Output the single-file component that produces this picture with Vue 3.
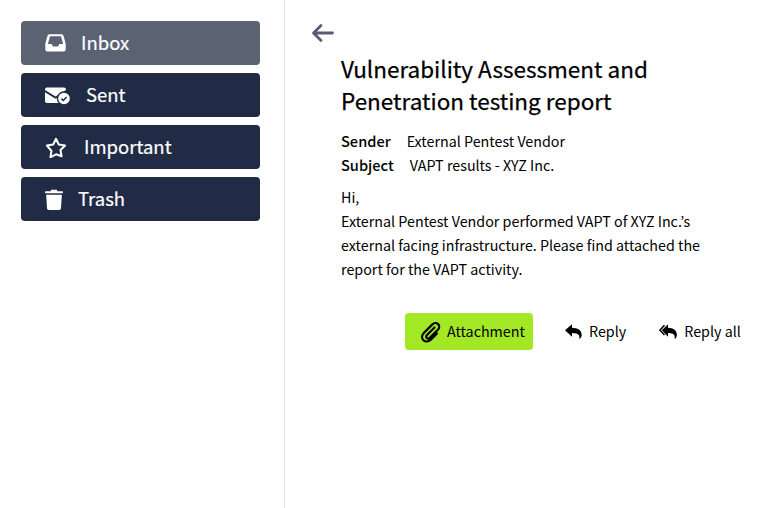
<script setup>
const items = [
  { label: 'Inbox', icon: 'inbox', active: true, gap: 'g1' },
  { label: 'Sent', icon: 'sent', gap: 'g2' },
  { label: 'Important', icon: 'star', gap: 'g3' },
  { label: 'Trash', icon: 'trash', gap: 'g4' }
]
</script>

<template>
  <div class="page">
    <aside class="side">
      <a v-for="it in items" :key="it.label" class="nav" :class="{ active: it.active }">
        <span class="ico" :class="it.gap">
          <svg v-if="it.icon === 'inbox'" width="21" height="18" viewBox="0 0 21 18">
            <path fill-rule="evenodd" fill="#fff" d="M4.6 0.3h11.800c1 0 1.800.6 2.100 1.500l2.200 8v5.400c0 1.300-1 2.300-2.300 2.300H2.600C1.300 17.500.300 16.500.300 15.200V9.800l2.200-8C2.800 .9 3.600.300 4.600.300ZM5 2.300L2.900 10h3.700l1.400 2.400h5l1.400-2.400h3.700L16 2.300H5Z"/>
          </svg>
          <svg v-else-if="it.icon === 'sent'" width="26" height="20" viewBox="0 0 26 20">
            <path fill="#fff" d="M2 2.500h17c1.100 0 2 .9 2 2v.6L10.500 11.500 0 5.100V4.500c0-1.100.9-2 2-2Z"/>
            <path fill="#fff" d="M0 7.300l10.500 6.400L21 7.300V18H2c-1.100 0-2-.9-2-2V7.300Z"/>
            <circle cx="19" cy="13.500" r="7.200" fill="#212b45"/>
            <circle cx="19" cy="13.500" r="5.800" fill="#fff"/>
            <path d="M16.400 13.600l1.900 1.900 3.300-3.400" fill="none" stroke="#212b45" stroke-width="1.500"/>
          </svg>
          <svg v-else-if="it.icon === 'star'" width="22" height="21" viewBox="0 0 22 21">
            <path fill="none" stroke="#fff" stroke-width="2" stroke-linejoin="round" d="M11 1.800l2.800 5.800 6.300.9-4.600 4.500 1.100 6.300L11 17.300l-5.600 3 1.100-6.300L1.900 8.500l6.300-.9L11 1.800Z"/>
          </svg>
          <svg v-else width="18" height="21" viewBox="0 0 18 21">
            <path fill="#fff" d="M6.200.800h5.600l.7 1.400H17c.6 0 1 .4 1 1s-.4 1-1 1H1c-.6 0-1-.4-1-1s.4-1 1-1h4.500l.7-1.400Z"/>
            <path fill="#fff" d="M1.200 5.800h15.600l-.8 13.500c-.1 1-.9 1.700-1.900 1.700H3.900c-1 0-1.800-.7-1.900-1.700L1.200 5.800Z"/>
          </svg>
        </span>
        <span class="nav-label">{{ it.label }}</span>
      </a>
    </aside>

    <main class="main">
      <svg class="back" width="24" height="20" viewBox="0 0 24 20">
        <path d="M21.500 10H3M10 2.500L2.500 10l7.500 7.500" fill="none" stroke="#565d72" stroke-width="2.800" stroke-linecap="round" stroke-linejoin="round"/>
      </svg>
      <div class="body">
        <h1 class="title">Vulnerability Assessment and<br>Penetration testing report</h1>
        <div class="meta"><b class="k1">Sender</b>External Pentest Vendor</div>
        <div class="meta"><b class="k2">Subject</b>VAPT results - XYZ Inc.</div>
        <p class="msg">Hi,<br>External Pentest Vendor performed VAPT of XYZ Inc.’s<br>external facing infrastructure. Please find attached the<br>report for the VAPT activity.</p>
      </div>
      <div class="actions">
        <button class="btn attach">
          <svg width="20" height="22" viewBox="0 0 20 22">
            <path fill="none" stroke="#000" stroke-width="2.200" stroke-linecap="round" stroke-linejoin="round" d="M13.500 6.500L6 14c-1 1-1 2.300-.2 3 .8.800 2 .7 3-.2l8-8c1.800-1.800 1.800-4.200.3-5.700s-3.900-1.500-5.700.3L3 11.800c-2.400 2.500-2.500 5.500-.6 7.400 1.900 1.900 4.900 1.800 7.400-.6L16 12.500"/>
          </svg>
          <span class="btn-label">Attachment</span>
        </button>
        <button class="btn plain r1">
          <svg width="17" height="15" viewBox="0 0 17 15">
            <path fill="#000" d="M7 .300v3.400c5.500.1 9.700 2.400 9.700 7.100 0 1.800-.7 3.100-1.800 3.900-.3.200-.7 0-.6-.4.500-2.600-.2-5-7.300-5.200v3.700L0 6.200 7 .300Z"/>
          </svg>
          <span class="btn-label">Reply</span>
        </button>
        <button class="btn plain r2">
          <svg width="18" height="15" viewBox="0 0 18 15">
            <path fill="#000" d="M9 .300v3.400c5 .1 8.900 2.400 8.900 7.100 0 1.800-.6 3.100-1.700 3.900-.3.200-.7 0-.6-.4.500-2.600-.2-5-6.600-5.200v3.700L2.800 6.200 9 .300Z"/>
            <path fill="none" stroke="#000" stroke-width="1.500" d="M5.500 1.200L.9 6.200l4.600 4.700"/>
          </svg>
          <span class="btn-label">Reply all</span>
        </button>
      </div>
    </main>
  </div>
</template>

<style>
html, body { margin: 0; background: #fff; }
</style>

<style scoped>
.page {
  display: flex;
  width: 760px;
  height: 508px;
  overflow: hidden;
  font-family: "Noto Sans CJK JP", "Liberation Sans", sans-serif;
  color: #000;
}
.side {
  box-sizing: border-box;
  width: 285px;
  flex: none;
  border-right: 1px solid #e5e7eb;
  padding: 21px 24px 0 21px;
  display: flex;
  flex-direction: column;
  gap: 8px;
}
.nav {
  height: 44px;
  border-radius: 4px;
  background: #212b45;
  color: #fff;
  display: flex;
  align-items: center;
  padding-left: 24px;
  font-size: 18.5px;
  line-height: 28px;
}
.nav-label { margin-bottom: 2px; -webkit-text-stroke: 0.2px #fff; }
.nav.active { background: #5b6272; }
.ico { display: flex; align-items: center; }
.g1 { width: 36px; }
.g2 { width: 41px; }
.g3 { width: 39px; }
.g4 { width: 33px; }
.main { flex: 1; min-width: 0; display: flex; flex-direction: column; }
.back { margin: 23px 0 0 26px; display: block; }
.body { padding: 0 0 0 56px; }
.title {
  margin: 9px 0 0;
  font-size: 22.5px;
  line-height: 32px;
  font-weight: 400;
  -webkit-text-stroke: 0.25px #000;
}
.meta { font-size: 14.3px; line-height: 24px; }
.title + .meta { margin-top: 13px; }
.meta b { font-weight: 500; font-size: 14.6px; }
.k1 { margin-right: 16px; }
.k2 { margin-right: 16px; }
.msg { margin: 8px 0 0; font-size: 14.3px; line-height: 24px; }
.actions {
  display: flex;
  align-items: center;
  margin: 32px 0 0 120px;
}
.btn {
  height: 37px;
  border: 0;
  padding: 0;
  background: none;
  font: inherit;
  font-size: 14.3px;
  line-height: 24px;
  color: #000;
  display: flex;
  align-items: center;
}
.btn-label { margin-bottom: 2px; }
.attach {
  width: 128px;
  background: #a3e824;
  border-radius: 4px;
  padding-left: 16px;
  gap: 6px;
  box-sizing: border-box;
}
.r1 { margin-left: 32px; gap: 7px; }
.r2 { margin-left: 33px; gap: 7px; }
</style>
